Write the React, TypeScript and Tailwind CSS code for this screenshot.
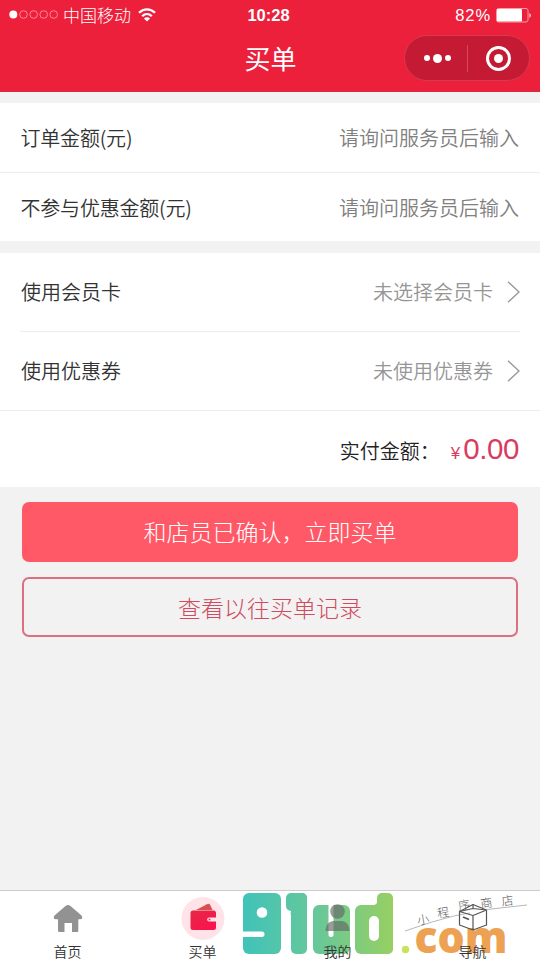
import React from "react";

const cjk = "font-['Noto_Sans_CJK_SC',sans-serif]";

function StatusBar() {
  return (
    <div className="grid h-[30px] grid-cols-3 items-center text-white">
      <div className="flex items-center pl-[9px]">
        <svg width="50" height="10" viewBox="0 0 50 10" fill="none" stroke="#ff8794" strokeWidth="1">
          <circle cx="4.3" cy="4.500" r="4" fill="#fff" stroke="none" />
          <circle cx="14.5" cy="4.500" r="3.8" />
          <circle cx="24.7" cy="4.500" r="3.8" />
          <circle cx="34.7" cy="4.500" r="3.8" />
          <circle cx="44.7" cy="4.500" r="3.8" />
        </svg>
        <span className="ml-[4px] text-[17px] leading-[30px] font-light">中国移动</span>
        <svg className="ml-[7px]" width="18" height="14" viewBox="0 0 18 14" fill="none" stroke="#fff" strokeWidth="2.3">
          <path d="M1 4.8C5.5.2 12.5.2 17 4.8" />
          <path d="M4.2 8.2C7 5.4 11 5.4 13.8 8.2" />
          <path d="M9 13.6L5.9 10.4C7.8 8.8 10.2 8.8 12.1 10.4Z" fill="#fff" stroke="none" />
        </svg>
      </div>
      <span className="pr-[3px] text-center font-['Liberation_Sans',sans-serif] text-[16.5px] font-bold">10:28</span>
      <div className="flex items-center justify-end pr-[8px]">
        <span className="pt-[1px] font-['Liberation_Sans',sans-serif] text-[16.5px] tracking-[0.9px]">82%</span>
        <svg className="ml-[5px]" width="36" height="15" viewBox="0 0 36 15">
          <rect x=".5" y=".5" width="31.500" height="13.500" rx="2" fill="none" stroke="#ff9aa4" />
          <rect x="1" y="1" width="25" height="12.500" rx="1" fill="#fff" />
          <path d="M33.500 5Q36 7.500 33.500 10Z" fill="#fff" />
        </svg>
      </div>
    </div>
  );
}

function Header() {
  return (
    <header className="h-[92px] border-b border-[#d92c44] bg-[#ec203b]">
      <StatusBar />
      <div className="grid h-[56px] grid-cols-3 items-center text-white">
        <span />
        <h1 className="pl-[1px] text-center text-[26px] leading-[56px] font-normal">买单</h1>
        <div className="mr-[10px] flex h-[46px] w-[126px] items-center justify-self-end rounded-full border border-[#d93950] bg-[#c41a33]">
          <div className="flex flex-1 items-center justify-center gap-[3px] pl-[2px]">
            <i className="size-[6px] rounded-full bg-white" />
            <i className="size-[9px] rounded-full bg-white" />
            <i className="size-[6px] rounded-full bg-white" />
          </div>
          <div className="h-[27px] w-px bg-[#d5475a]" />
          <div className="flex flex-1 items-center justify-center pr-[1px]">
            <div className="flex size-[25px] items-center justify-center rounded-full border-[3px] border-white">
              <i className="size-[9px] rounded-full bg-white" />
            </div>
          </div>
        </div>
      </div>
    </header>
  );
}

function InputRow({ label }: { label: string }) {
  return (
    <div className="flex h-[69px] items-center justify-between pr-[21px] pl-[20.5px] text-[20px] leading-[30px]">
      <span className="tracking-[-0.2px] text-[#333]">{label}</span>
      <span className="text-[#808080]">请询问服务员后输入</span>
    </div>
  );
}

function SelectRow({ label, value }: { label: string; value: string }) {
  return (
    <div className="flex h-[78px] items-center text-[20px] leading-[30px]">
      <span className="flex-1 pl-px text-[#333]">{label}</span>
      <span className="text-[#969696]">{value}</span>
      <svg className="ml-[13px]" width="14" height="22" viewBox="0 0 14 22" fill="none" stroke="#999" strokeWidth="1.400">
        <path d="M2 .8L13 11L2 21.200" />
      </svg>
    </div>
  );
}

function HomeIcon() {
  return (
    <svg className="shrink-0" width="44" height="44" viewBox="0 0 44 44">
      <path d="M22 8Q23.200 8 24.500 9L35.500 18.500Q37.500 21.800 34.500 22.300H32.300V34Q32.300 35 31.300 35H26V26H18.500V35H13.500Q12 35 12 34V22.300H9.500Q6.500 21.800 8.500 18.500L19.500 9Q20.800 8 22 8Z" fill="#929292" />
    </svg>
  );
}

function WalletIcon() {
  return (
    <svg className="shrink-0" width="44" height="44" viewBox="0 0 44 44">
      <defs>
        <linearGradient id="wallet" x1="0" y1="0" x2="1" y2="1">
          <stop offset="0" stopColor="#e32a44" />
          <stop offset="1" stopColor="#ff0f50" />
        </linearGradient>
      </defs>
      <circle cx="22" cy="21.500" r="21.500" fill="#ffe3e8" />
      <path d="M15 13L26 7.200Q28 6.200 29.200 8L31.500 13Z" fill="#d94f4b" />
      <rect x="9.500" y="13.500" width="25.500" height="19.500" rx="2.500" fill="url(#wallet)" />
      <path d="M35 20.500H28.200A2 2 0 0 0 28.200 24.600H35Z" fill="#ffe3e8" />
      <circle cx="28.500" cy="22.500" r="1" fill="#ed2549" />
    </svg>
  );
}

function PersonIcon() {
  return (
    <svg className="shrink-0" width="44" height="44" viewBox="0 0 44 44" fill="#666" fillOpacity=".65">
      <circle cx="21.500" cy="14.500" r="7.300" />
      <path d="M9.500 34C9.500 27.500 13.500 24 17.500 24H25.500C29.500 24 33.500 27.500 33.500 34Z" />
    </svg>
  );
}

function BoxIcon() {
  return (
    <svg className="shrink-0" width="44" height="44" viewBox="0 0 44 44" fill="none" stroke="#555" strokeWidth="1.200" strokeLinejoin="round">
      <path d="M8.500 14.500L22 7.500L35.500 13V28L22 33L8.500 28Z" />
      <path d="M8.500 14.500L22 18.500L35.500 13M22 18.500V33M8.500 14.500L22 11.500L35.500 13M22 7.500V11.500" />
      <path d="M12 20L18 22.500" strokeWidth="1.800" />
    </svg>
  );
}

function Tab({ icon, label }: { icon: React.ReactNode; label: string }) {
  return (
    <div className="relative flex flex-1 flex-col items-center pt-[6px]">
      {icon}
      <span className="text-[14px] leading-[21px] text-[#333]">{label}</span>
    </div>
  );
}

function Watermark() {
  return (
    <svg className="pointer-events-none absolute top-0 left-[230px]" width="310" height="69" viewBox="0 0 310 69">
      <defs>
        <linearGradient id="brand" gradientUnits="userSpaceOnUse" x1="13" y1="0" x2="164" y2="0">
          <stop offset="0" stopColor="#40c3b9" />
          <stop offset=".5" stopColor="#68c898" />
          <stop offset="1" stopColor="#98cf62" />
        </linearGradient>
      </defs>
      <g fill="url(#brand)">
        <g fontFamily="Liberation Sans, sans-serif" fontWeight="700">
          <text x="18" y="54" fontSize="50">9</text>
          <text x="59" y="24" fontSize="26">1</text>
          <text x="86" y="56" fontSize="50">u</text>
          <text x="130" y="56" fontSize="50">d</text>
        </g>
        <rect x="13" y="2" width="38" height="61" rx="6" />
        <rect x="56" y="2" width="21" height="18" rx="5" />
        <rect x="61" y="2" width="16" height="61" rx="5" />
        <rect x="83" y="14" width="37" height="49" rx="6" />
        <rect x="125" y="14" width="38" height="49" rx="6" />
        <rect x="147" y="2" width="16" height="61" rx="5" />
        <path d="M143 14.500Q147.500 13.500 147.500 9V15Z" />
      </g>
      <g fill="#fff">
        <circle cx="32" cy="21.500" r="5.300" />
        <rect x="8" y="40.500" width="26.500" height="5.500" rx="2.700" />
        <rect x="98.500" y="12" width="5" height="34" rx="2.500" />
        <rect x="139" y="25" width="10" height="25" rx="5" />
      </g>
      <circle cx="175.500" cy="58.500" r="3.700" fill="#c7e457" />
      <text x="184.500" y="61.500" textLength="93" lengthAdjust="spacingAndGlyphs" fontFamily="Open Sans, sans-serif" fontWeight="800" fontSize="44" fill="#eda253">com</text>
      <path d="M175 40L202 31L225 24.700L240 22M257 18.500L297 14" fill="none" stroke="#999" strokeWidth=".7" />
      <g fontFamily="Noto Sans CJK SC, sans-serif" fontWeight="300" fontSize="12" fill="#555" textAnchor="middle">
        <text transform="translate(194 33) rotate(-10)">小</text>
        <text transform="translate(214 26) rotate(-10)">程</text>
        <text transform="translate(235 18.500) rotate(-10)">序</text>
        <text transform="translate(257 16.500) rotate(-8)">商</text>
        <text transform="translate(278 14) rotate(-6)">店</text>
      </g>
    </svg>
  );
}

export default function App() {
  return (
    <main className={`${cjk} flex h-[960px] w-[540px] flex-col overflow-hidden bg-[#f2f2f2] font-[350]`}>
      <Header />
      <section className="mt-[11px] bg-white">
        <div className="border-b border-[#ececec]">
          <InputRow label="订单金额(元)" />
        </div>
        <div className="-mb-px">
          <InputRow label="不参与优惠金额(元)" />
        </div>
      </section>
      <section className="mt-[12px] bg-white">
        <div className="mx-[20px] border-b border-[#ececec]">
          <SelectRow label="使用会员卡" value="未选择会员卡" />
        </div>
        <div className="border-b border-[#ececec] px-[20px]">
          <SelectRow label="使用优惠券" value="未使用优惠券" />
        </div>
        <div className="flex h-[76px] items-center justify-end pr-[21px]">
          <span className="pt-[4px] text-[20px] leading-[30px] text-[#222]">实付金额：</span>
          <span className="ml-[11px] flex items-baseline font-['Liberation_Sans',sans-serif] text-[#d83c5f]">
            <span className="mr-[3px] text-[17px]">¥</span>
            <span className="text-[29.5px] tracking-[-0.4px]">0.00</span>
          </span>
        </div>
      </section>
      <section className="mt-[15px] flex flex-col gap-[15px] px-[22px]">
        <button className="h-[60px] rounded-[7px] bg-[#ff5968] pb-[1px] text-[23px] font-light text-white">和店员已确认，立即买单</button>
        <button className="h-[60px] rounded-[7px] border-2 border-[#db7080] pt-[1px] text-[23px] font-light text-[#d04a60]">查看以往买单记录</button>
      </section>
      <nav className="relative mt-auto flex h-[70px] border-t border-[#ccc] bg-white">
        <Watermark />
        <Tab icon={<HomeIcon />} label="首页" />
        <Tab icon={<WalletIcon />} label="买单" />
        <Tab icon={<PersonIcon />} label="我的" />
        <Tab icon={<BoxIcon />} label="导航" />
      </nav>
    </main>
  );
}
